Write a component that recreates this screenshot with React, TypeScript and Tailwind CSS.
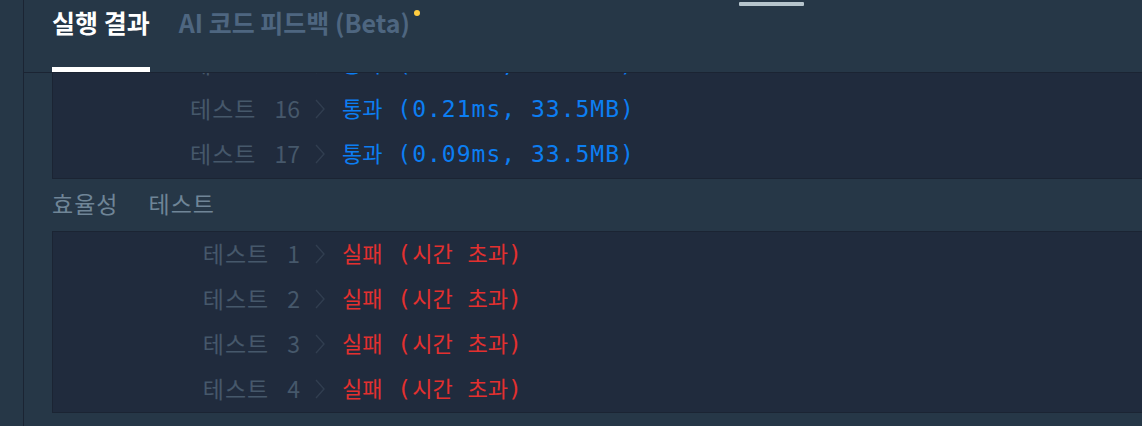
import React from "react";

const sans = "font-['Noto_Sans_CJK_KR','Noto_Sans',sans-serif]";
const mono = "font-['DejaVu_Sans_Mono','Noto_Sans_CJK_KR',monospace]";

type Part = { ko?: boolean; t: string };
type Row = { n: number; ok: boolean; parts: Part[] };

const passParts = (time: string): Part[] => [
  { ko: true, t: "통과" },
  { t: ` (${time}, 33.5MB)` },
];

const accuracyRows: Row[] = [
  { n: 15, ok: true, parts: passParts("0.13ms") },
  { n: 16, ok: true, parts: passParts("0.21ms") },
  { n: 17, ok: true, parts: passParts("0.09ms") },
];

const failParts: Part[] = [
  { ko: true, t: "실패" },
  { t: " (" },
  { ko: true, t: "시간" },
  { t: " " },
  { ko: true, t: "초과" },
  { t: ")" },
];

const efficiencyRows: Row[] = [1, 2, 3, 4].map((n) => ({
  n,
  ok: false,
  parts: failParts,
}));

function Chevron() {
  return (
    <svg width="12" height="22" viewBox="0 0 12 22" className="shrink-0">
      <polyline
        points="2,2 10,11 2,20"
        fill="none"
        stroke="#313e50"
        strokeWidth="1.4"
      />
    </svg>
  );
}

function ResultRow({ row }: { row: Row }) {
  return (
    <div className="h-[45px] shrink-0 flex items-center pb-[2px]">
      <div
        className={
          "w-[247px] flex justify-end items-center gap-[18px] text-[23px] leading-none text-[#46586b] " +
          sans
        }
      >
        <span className="tracking-[1px]">테스트</span>
        <span>{row.n}</span>
      </div>
      <div className="ml-[14px]">
        <Chevron />
      </div>
      <div
        className={
          "ml-[16px] text-[23px] leading-none tracking-[1px] whitespace-pre " +
          mono +
          (row.ok ? " text-[#0c7ef2]" : " text-[#e3302f]")
        }
      >
        {row.parts.map((p, i) =>
          p.ko ? (
            <span key={i} className={"text-[22px] tracking-normal " + sans}>
              {p.t}
            </span>
          ) : (
            <span key={i}>{p.t}</span>
          )
        )}
      </div>
    </div>
  );
}

export default function App() {
  return (
    <div
      className={
        "w-[1142px] h-[426px] overflow-hidden bg-[#263747] flex " + sans
      }
    >
      <div className="w-[24px] shrink-0 border-r border-[#1b2433]" />
      <div className="flex-1 min-w-0 relative flex flex-col">
        <div className="absolute left-[715px] top-[2px] w-[65px] h-[4px] rounded-[1px] bg-[#b6c4cc]" />

        <div className="h-[73px] shrink-0 border-b border-[#1b2433] pl-[28px] flex gap-[29px]">
          <div className="flex flex-col justify-between">
            <div className="pt-[5px] text-[25px] leading-[34px] font-bold text-white">
              실행 결과
            </div>
            <div className="h-[5px] bg-white" />
          </div>
          <div className="relative pt-[5px] text-[25px] leading-[34px] font-bold text-[#4e6680]">
            AI 코드 피드백 (Beta)
            <span className="absolute -right-[10px] top-[10px] w-[6px] h-[6px] rounded-full bg-[#ffcd40]" />
          </div>
        </div>

        <div className="pl-[28px] flex flex-col">
          <div className="h-[106px] overflow-hidden bg-[#202b3d] border-l border-b border-[#1b2433] flex flex-col justify-end pb-[1px]">
            {accuracyRows.map((r) => (
              <ResultRow key={r.n} row={r} />
            ))}
          </div>

          <div className="h-[52px] pb-[4px] flex items-center gap-[30px] text-[23px] leading-none tracking-[1px] text-[#6f8597]">
            <span>효율성</span>
            <span>테스트</span>
          </div>

          <div className="bg-[#202b3d] border-l border-y border-[#1b2433] flex flex-col">
            {efficiencyRows.map((r) => (
              <ResultRow key={r.n} row={r} />
            ))}
          </div>
        </div>
      </div>
    </div>
  );
}
